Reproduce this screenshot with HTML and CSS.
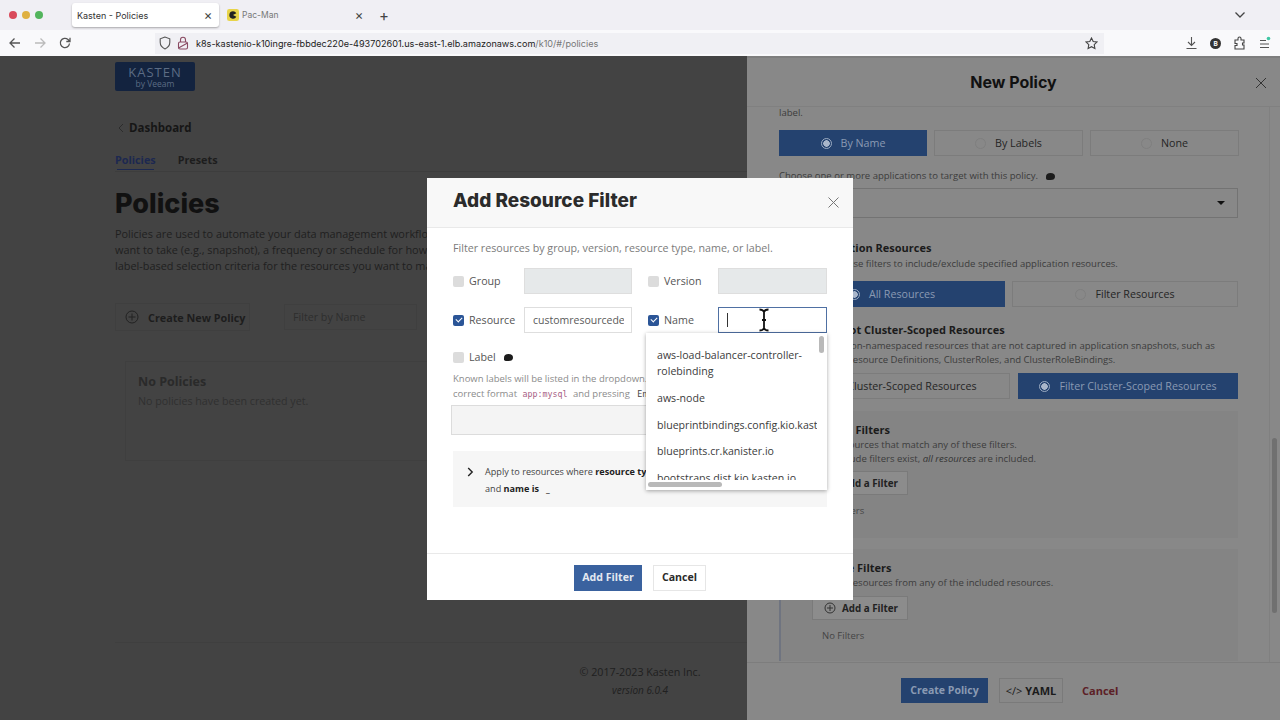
FILE: index.html
```html
<!DOCTYPE html>
<html lang="en">
<head>
    <meta charset="UTF-8">
    <meta name="viewport" content="width=device-width, initial-scale=1.0">
    <title>Kasten - Policies</title>
    <link rel="stylesheet" href="styles.css">
</head>
<body>
    <!-- Browser chrome -->
    <div class="tabbar">
        <div class="lights"><i class="red"></i><i class="yellow"></i><i class="green"></i></div>
        <div class="tab active"><span>Kasten - Policies</span><b>×</b></div>
        <div class="tab">
            <svg class="favicon" width="12" height="12" viewBox="0 0 13 13"><rect width="13" height="13" rx="2.5" fill="#e8d44a"/><path d="M6.500 2.500a4 4 0 1 0 3.600 5.800L6.500 6.500l3.600-1.800a4 4 0 0 0-3.600-2.200z" fill="#222"/></svg>
            <span>Pac-Man</span><b>×</b>
        </div>
        <div class="newtab">+</div>
        <svg class="tabs-menu" width="12" height="8" viewBox="0 0 12 8"><path d="M1.500 1.500 6 6l4.500-4.500" fill="none" stroke="#444" stroke-width="1.300"/></svg>
    </div>
    <div class="toolbar">
        <svg class="nav" width="14" height="14" viewBox="0 0 14 14"><path d="M12 7H2M6.500 2.500 2 7l4.500 4.500" fill="none" stroke="#555" stroke-width="1.300"/></svg>
        <svg class="nav" width="14" height="14" viewBox="0 0 14 14"><path d="M2 7h10M7.500 2.500 12 7l-4.500 4.500" fill="none" stroke="#bbb" stroke-width="1.300"/></svg>
        <svg class="nav" width="14" height="14" viewBox="0 0 14 14"><path d="M11.500 7.500A4.600 4.600 0 1 1 10 3.500L12 5.500M12 1.800v3.700H8.300" fill="none" stroke="#555" stroke-width="1.300"/></svg>
        <div class="urlbar">
            <svg width="12" height="14" viewBox="0 0 12 14"><path d="M6 1 1.200 2.800v3.500c0 3.200 2 5.400 4.800 6.700 2.800-1.300 4.800-3.500 4.800-6.700V2.800z" fill="none" stroke="#555" stroke-width="1.100"/></svg>
            <svg class="lock" width="12" height="14" viewBox="0 0 12 14"><rect x="1.500" y="6" width="9" height="7" rx="1.500" fill="none" stroke="#8a4a62" stroke-width="1.100"/><path d="M3.500 6V3.800a2.500 2.500 0 0 1 5 0V6M1.500 12 10.500 7" fill="none" stroke="#8a4a62" stroke-width="1.100"/></svg>
            <span class="url">k8s-kastenio-k10ingre-fbbdec220e-493702601.us-east-1.elb.amazonaws.com<em>/k10/#/policies</em></span>
            <svg class="star" width="13" height="13" viewBox="0 0 13 13"><path d="m6.500 1 1.700 3.500 3.800.5-2.800 2.700.7 3.800-3.400-1.800-3.400 1.800.7-3.800L1 5l3.800-.5z" fill="none" stroke="#444" stroke-width="1.100"/></svg>
        </div>
        <div class="tools">
            <svg width="13" height="14" viewBox="0 0 13 14"><path d="M6.500 1v8M3 6l3.500 3.500L10 6M1.500 12.500h10" fill="none" stroke="#555" stroke-width="1.100"/></svg>
            <div class="ext-badge">B</div>
            <svg width="13" height="14" viewBox="0 0 13 14"><path d="M2 4h3V2.500a1.500 1.500 0 0 1 3 0V4h3v3H9.500v2H11v4H2V9.500h2v-2H2z" fill="none" stroke="#444" stroke-width="1.100"/></svg>
            <svg width="13" height="14" viewBox="0 0 13 14"><path d="M2 4.500h6M2 8h9M2 11.500h9" stroke="#555" stroke-width="1.200"/><circle cx="10.500" cy="2.500" r="1.800" fill="#3fc7a5"/></svg>
        </div>
    </div>

    <div class="app">
        <!-- Dimmed policies page -->
        <main class="page">
            <div class="logo"><span class="logo-name">KASTEN</span><span class="logo-by">by Veeam</span></div>
            <div class="crumb"><svg width="6" height="10" viewBox="0 0 6 10"><path d="M5 1 1 5l4 4" fill="none" stroke="#2c2c2c" stroke-width="1"/></svg>Dashboard</div>
            <nav class="tabs-nav"><span class="nav-on">Policies</span><span>Presets</span></nav>
            <h1>Policies</h1>
            <p class="lead">Policies are used to automate your data management workflows. They combine actions you<br>want to take (e.g., snapshot), a frequency or schedule for how often to take that action, and<br>label-based selection criteria for the resources you want to manage.</p>
            <div class="page-actions">
                <div class="create-btn">
                    <svg width="14" height="14" viewBox="0 0 14 14"><circle cx="7" cy="7" r="6" fill="none" stroke="#222" stroke-width="1"/><path d="M7 3.500v7M3.500 7h7" stroke="#222" stroke-width="1"/></svg>
                    Create New Policy
                </div>
                <div class="page-filter">Filter by Name</div>
            </div>
            <div class="empty">
                <h3>No Policies</h3>
                <p>No policies have been created yet.</p>
            </div>
            <footer class="page-foot">
                <div>© 2017-2023 Kasten Inc.</div>
                <div class="version">version 6.0.4</div>
            </footer>
        </main>

        <!-- New policy drawer -->
        <aside class="drawer">
            <div class="drawer-head">
                New Policy
                <svg class="drawer-close" width="12" height="12" viewBox="0 0 12 12"><path d="m1 1 10 10M11 1 1 11" stroke="#333" stroke-width="1"/></svg>
            </div>
            <div class="drawer-body">
                <p class="note note-top">label.</p>
                <div class="seg seg-three">
                    <div class="seg-item on"><i class="radio"></i>By Name</div>
                    <div class="seg-item"><i class="radio"></i>By Labels</div>
                    <div class="seg-item"><i class="radio"></i>None</div>
                </div>
                <p class="note note-app">Choose one or more applications to target with this policy. <i class="bubble"></i></p>
                <div class="select"><i class="caret-down"></i></div>

                <h4 class="sect-title">Application Resources</h4>
                <p class="note indent">You can use filters to include/exclude specified application resources.</p>
                <div class="seg seg-two">
                    <div class="seg-item on"><i class="radio"></i>All Resources</div>
                    <div class="seg-item"><i class="radio"></i>Filter Resources</div>
                </div>

                <h4 class="sect-title sect-snap">Snapshot Cluster-Scoped Resources</h4>
                <p class="note indent">Include non-namespaced resources that are not captured in application snapshots, such as<br>Custom Resource Definitions, ClusterRoles, and ClusterRoleBindings.</p>
                <div class="seg seg-two seg-cluster">
                    <div class="seg-item"><i class="radio"></i>All Cluster-Scoped Resources</div>
                    <div class="seg-item on"><i class="radio"></i>Filter Cluster-Scoped Resources</div>
                </div>

                <section class="filter-block block-include">
                    <h4>Include Filters</h4>
                    <p class="note">Only resources that match any of these filters.<br>If no include filters exist, <em>all resources</em> are included.</p>
                    <div class="add-btn"><svg width="12" height="12" viewBox="0 0 12 12"><circle cx="6" cy="6" r="5" fill="none" stroke="#333"/><path d="M6 3v6M3 6h6" stroke="#333"/></svg>Add a Filter</div>
                    <p class="no-filters">No Filters</p>
                </section>
                <section class="filter-block block-exclude">
                    <h4>Exclude Filters</h4>
                    <p class="note">Exclude resources from any of the included resources.</p>
                    <div class="add-btn"><svg width="12" height="12" viewBox="0 0 12 12"><circle cx="6" cy="6" r="5" fill="none" stroke="#333"/><path d="M6 3v6M3 6h6" stroke="#333"/></svg>Add a Filter</div>
                    <p class="no-filters">No Filters</p>
                </section>
            </div>
            <div class="scroll-thumb"></div>
            <div class="drawer-foot">
                <div class="btn-create">Create Policy</div>
                <div class="btn-yaml"><span class="code-mark">&lt;/&gt;</span> YAML</div>
                <div class="btn-cancel">Cancel</div>
            </div>
        </aside>

        <!-- Add filter dialog -->
        <div class="modal">
            <div class="modal-head">
                <h2>Add Resource Filter</h2>
                <svg width="11" height="11" viewBox="0 0 11 11"><path d="m.5.500 10 10M10.500.500l-10 10" stroke="#777" stroke-width="1"/></svg>
            </div>
            <div class="modal-body">
                <p class="modal-desc">Filter resources by group, version, resource type, name, or label.</p>
                <div class="form-grid">
                    <i class="check"></i><span class="lbl">Group</span><div class="field disabled"></div>
                    <i class="check"></i><span class="lbl">Version</span><div class="field disabled"></div>

                    <i class="check checked"></i><span class="lbl">Resource</span><div class="field"><span class="field-text">customresourcedefinitions</span></div>
                    <i class="check checked"></i><span class="lbl">Name</span>
                    <div class="field focused">
                        <span class="text-caret"></span>
                        <div class="dropdown">
                            <div class="dd-list">
                                <div class="dd-item">aws-load-balancer-controller-rolebinding</div>
                                <div class="dd-item">aws-node</div>
                                <div class="dd-item nowrap">blueprintbindings.config.kio.kasten.io</div>
                                <div class="dd-item">blueprints.cr.kanister.io</div>
                                <div class="dd-item">bootstraps.dist.kio.kasten.io</div>
                            </div>
                            <div class="dd-vbar"><i></i></div>
                            <div class="dd-hbar"><i></i></div>
                        </div>
                        <svg class="ibeam" width="12" height="24" viewBox="0 0 12 24"><path d="M1.500 1.500c2.500 0 4 .8 4.500 2.500.5-1.700 2-2.500 4.500-2.500M6 4v16M1.500 22.500c2.500 0 4-.8 4.500-2.500.5 1.700 2 2.500 4.500 2.500M4 12h4" fill="none" stroke="#111" stroke-width="1.800"/></svg>
                    </div>
                </div>
                <div class="label-row"><i class="check"></i><span class="lbl">Label</span><i class="bubble"></i></div>
                <p class="help">Known labels will be listed in the dropdown. Add a new label by typing it in the<br>correct format <code>app:mysql</code> and pressing <kbd>Enter</kbd>.</p>
                <div class="label-input"></div>
                <div class="summary">
                    <svg width="7" height="10" viewBox="0 0 7 10"><path d="m1.200 1 4 4-4 4" fill="none" stroke="#222" stroke-width="1.400"/></svg>
                    <p>Apply to resources where <b>resource type is</b> customresourcedefinitions<br>and <b>name is</b> &nbsp; <b>_</b></p>
                </div>
            </div>
            <div class="modal-foot">
                <div class="btn-add">Add Filter</div>
                <div class="btn-plain">Cancel</div>
            </div>
        </div>
    </div>
</body>
</html>
```

FILE: styles.css
```css
* {
    box-sizing: border-box;
}
html, body {
    margin: 0;
    height: 720px;
    overflow: hidden;
}
body {
    font-family: "Open Sans", "Liberation Sans", sans-serif;
    font-size: 12px;
    color: #222;
    background: #434343;
}
p, h1, h2, h3, h4 {
    margin: 0;
}

/* browser chrome */
.tabbar {
    height: 30px;
    padding-top: 3px;
    display: flex;
    align-items: flex-start;
    background: #f0eff4;
    font-family: Inter, "Liberation Sans", sans-serif;
    font-size: 9px;
    color: #333;
}
.lights {
    display: flex;
    gap: 5px;
    padding: 8px 0 0 9px;
    width: 72px;
}
.lights i {
    width: 8px;
    height: 8px;
    border-radius: 50%;
}
.red { background: #d9495a; }
.yellow { background: #dfb041; }
.green { background: #52b45c; }
.tab {
    width: 151px;
    height: 24px;
    padding: 0 0 0 8px;
    display: flex;
    align-items: center;
}
.tab span {
    flex: 1;
    color: #777;
    font-size: 8.500px;
}
.tab b {
    font-weight: 400;
    font-size: 13px;
    width: 20px;
    text-align: center;
    color: #444;
    margin-right: 1px;
}
.tab.active {
    width: 147px;
    background: #fff;
    border-radius: 3px;
    box-shadow: 0 1px 2px rgba(0, 0, 0, .3);
    padding-left: 5px;
}
.tab.active span {
    color: #333;
    font-size: 9px;
}
.tab .favicon {
    margin-right: 3px;
}
.newtab {
    margin: 3px 0 0 9px;
    font-size: 15px;
    color: #444;
}
.tabs-menu {
    margin: 8px 34px 0 auto;
}
.toolbar {
    height: 26px;
    background: #f9f9fb;
    display: flex;
    align-items: center;
    padding-left: 8px;
}
.nav {
    margin-right: 11px;
}
.urlbar {
    margin-left: 72px;
    width: 949px;
    height: 21px;
    background: #f0f0f4;
    display: flex;
    align-items: center;
    padding-left: 4px;
    font-family: Inter, "Liberation Sans", sans-serif;
    font-size: 9.100px;
    color: #222;
}
.urlbar .lock {
    margin-left: 6px;
}
.url {
    margin-left: 7px;
}
.url em {
    font-style: normal;
    color: #777;
}
.star {
    margin-left: auto;
    margin-right: 6px;
}
.tools {
    display: flex;
    gap: 12px;
    align-items: center;
    margin-left: 81px;
}
.ext-badge {
    width: 11px;
    height: 11px;
    border-radius: 50%;
    background: #333;
    color: #eee;
    font-size: 7px;
    line-height: 11px;
    text-align: center;
    font-weight: 700;
}

/* the dimmed page behind */
.app {
    position: relative;
    height: 664px;
    overflow: hidden;
}
.page {
    height: 664px;
    padding: 6px 115px 0;
    display: flex;
    flex-direction: column;
    background: #434343;
    color: #1d1d1d;
}
.logo {
    width: 80px;
    height: 29px;
    background: #13233f;
    border-radius: 2px;
    display: flex;
    flex-direction: column;
    align-items: center;
    color: #5c6c84;
    line-height: 1;
}
.logo-name {
    font-size: 13px;
    letter-spacing: 1px;
    margin-top: 4px;
}
.logo-by {
    font-size: 8.500px;
    margin-top: 1px;
}
.crumb {
    margin-top: 28px;
    font-size: 11.500px;
    font-weight: 700;
    line-height: 18px;
    display: flex;
    align-items: center;
    gap: 5px;
    padding-left: 3px;
    color: #161616;
}
.tabs-nav {
    margin-top: 14px;
    display: flex;
    gap: 22px;
    font-size: 10.800px;
    font-weight: 700;
    line-height: 18px;
    border-bottom: 1px solid #3d3d3d;
    padding-bottom: 2px;
}
.nav-on {
    color: #1c2850;
    box-shadow: 0 3px 0 -2px #1c2850;
}
h1 {
    margin-top: 15px;
    font-family: Inter, "Liberation Sans", sans-serif;
    font-size: 27px;
    font-weight: 800;
    line-height: 34px;
    color: #111;
}
.lead {
    margin-top: 5px;
    font-size: 10.900px;
    line-height: 16px;
    white-space: nowrap;
    color: #1f1f1f;
}
.page-actions {
    margin-top: 29px;
    display: flex;
    gap: 34px;
    align-items: center;
}
.create-btn {
    width: 135px;
    height: 28px;
    border: 1px solid #3f3f3f;
    display: flex;
    align-items: center;
    gap: 9px;
    padding-left: 9px;
    font-size: 10.800px;
    font-weight: 700;
}
.page-filter {
    width: 133px;
    height: 26px;
    border: 1px solid #3f3f3f;
    padding-left: 8px;
    line-height: 24px;
    color: #2e2e2e;
    font-size: 10.700px;
}
.empty {
    margin: 30px 0 0 10px;
    width: 1030px;
    height: 100px;
    border: 1px solid #3f3f3f;
    padding: 11px 12px;
}
.empty h3 {
    font-size: 12.500px;
    line-height: 18px;
    color: #2a2a2a;
}
.empty p {
    margin-top: 3px;
    font-size: 10.700px;
    color: #303030;
}
.page-foot {
    margin-top: auto;
    padding: 22px 0 23px;
    border-top: 1px solid #3f3f3f;
    text-align: center;
    font-size: 10.700px;
    color: #202020;
}
.version {
    margin-top: 4px;
    font-size: 10px;
    font-style: italic;
}

/* new policy drawer */
.drawer {
    position: absolute;
    top: 0;
    right: 0;
    bottom: 0;
    width: 533px;
    background: #888;
    display: flex;
    flex-direction: column;
    color: #1f1f1f;
}
.drawer-head {
    height: 51px;
    flex: none;
    display: flex;
    align-items: center;
    justify-content: center;
    position: relative;
    font-family: Inter, "Liberation Sans", sans-serif;
    font-size: 16px;
    font-weight: 700;
    color: #111;
    border-bottom: 1px solid #808080;
    border-top: 2px solid #7e7e7e;
}
.drawer-close {
    position: absolute;
    right: 13px;
    top: 19px;
}
.drawer-body {
    flex: 1;
    overflow: hidden;
    margin-right: 10px;
    border-right: 1px solid #808080;
    padding: 0 31px 0 32px;
}
.note {
    font-size: 9.550px;
    line-height: 14px;
    color: #3c3c3c;
    white-space: nowrap;
}
.note-top {
    margin-top: -1px;
}
.indent {
    padding-left: 31px;
    margin-top: 1px;
}
.seg {
    display: grid;
    height: 26px;
}
.seg-three {
    grid-template-columns: 148px 149px 149px;
    gap: 7px;
    margin-top: 10px;
}
.seg-two {
    grid-template-columns: 226px 226px;
    gap: 7px;
    margin-top: 10px;
}
.seg-cluster {
    grid-template-columns: 231px 220px;
    gap: 8px;
    margin-top: 6px;
}
.seg-item {
    border: 1px solid #7c7c7c;
    display: flex;
    align-items: center;
    justify-content: center;
    gap: 9px;
    font-size: 10.700px;
    color: #252525;
}
.seg-item.on {
    background: #24426f;
    border-color: #24426f;
    color: #8a9ab3;
}
.radio {
    width: 11px;
    height: 11px;
    border-radius: 50%;
    border: 1px solid #7f7f7f;
}
.on .radio {
    border-color: #9babc2;
    background: radial-gradient(circle, #a9b6ca 0 3px, #24426f 3.500px);
}
.note-app {
    margin-top: 13px;
    display: flex;
    align-items: center;
    gap: 5px;
}
.bubble {
    width: 9px;
    height: 7px;
    border-radius: 50% 50% 50% 20%;
    background: #1c1c1c;
    display: inline-block;
    margin-left: 3px;
}
.select {
    margin-top: 5px;
    height: 30px;
    border: 1px solid #737373;
    display: flex;
    align-items: center;
    justify-content: flex-end;
    padding-right: 12px;
}
.caret-down {
    border: 4px solid transparent;
    border-top-color: #111;
    border-bottom: 0;
}
.sect-title {
    margin-top: 22px;
    padding-left: 31px;
    font-size: 11px;
    line-height: 16px;
    font-weight: 700;
    color: #1b1b1b;
}
.sect-snap {
    margin-top: 15px;
}
.filter-block {
    background: #848484;
    padding: 11px 33px 0;
}
.filter-block .note {
    margin-top: 1px;
}
.block-include {
    margin-top: 12px;
    height: 127px;
}
.block-exclude {
    margin-top: 11px;
    height: 112px;
    border-left: 2px solid #6f7480;
    padding-left: 31px;
}
.filter-block h4 {
    font-size: 11px;
    line-height: 15px;
    color: #1b1b1b;
}
.filter-block em {
    color: #333;
}
.add-btn {
    margin-top: 5px;
    width: 96px;
    height: 24px;
    border: 1px solid #7a7a7a;
    background: #8c8c8c;
    display: flex;
    align-items: center;
    gap: 6px;
    padding-left: 11px;
    font-size: 9.800px;
    font-weight: 700;
    color: #222;
}
.block-exclude .add-btn {
    margin-top: 6px;
}
.no-filters {
    margin: 9px 0 0 10px;
    font-size: 9.500px;
    color: #444;
}
.scroll-thumb {
    position: absolute;
    right: 3px;
    top: 382px;
    width: 5px;
    height: 175px;
    background: #707070;
    border-radius: 3px;
}
.drawer-foot {
    height: 58px;
    flex: none;
    border-top: 1px solid #7d7d7d;
    display: flex;
    align-items: center;
    padding-left: 154px;
    padding-bottom: 2px;
    font-weight: 700;
    font-size: 10.500px;
}
.btn-create {
    width: 87px;
    height: 25px;
    background: #24426f;
    color: #8a9ab3;
    line-height: 25px;
    text-align: center;
}
.btn-yaml {
    margin-left: 11px;
    width: 64px;
    height: 25px;
    border: 1px solid #7a7a7a;
    line-height: 23px;
    text-align: center;
    color: #1b1b1b;
    font-size: 11px;
}
.code-mark {
    font-weight: 400;
}
.btn-cancel {
    margin-left: 19px;
    color: #5c2026;
    font-size: 11px;
}

/* add filter dialog */
.modal {
    position: absolute;
    left: 427px;
    top: 122px;
    width: 426px;
    height: 422px;
    background: #fff;
    display: flex;
    flex-direction: column;
}
.modal-head {
    height: 50px;
    flex: none;
    background: #f8f8f8;
    border-bottom: 1px solid #e9e9e9;
    display: flex;
    justify-content: space-between;
    padding: 0 14px 0 26px;
}
.modal-head h2 {
    font-family: Inter, "Liberation Sans", sans-serif;
    font-size: 19px;
    line-height: 45px;
    font-weight: 800;
    color: #2b2b2b;
}
.modal-head svg {
    margin-top: 19px;
}
.modal-body {
    flex: 1;
    padding: 12px 26px 0;
}
.modal-desc {
    font-size: 10.700px;
    line-height: 17px;
    color: #7b7b7b;
}
.form-grid {
    margin-top: 11px;
    display: grid;
    grid-template-columns: 11px 50px 108px 22px 49px 109px;
    grid-auto-rows: 26px;
    column-gap: 5px;
    row-gap: 13px;
    align-items: center;
    font-size: 10.700px;
}
.check {
    width: 11px;
    height: 11px;
    border-radius: 2px;
    background: #dcdcdc;
    display: block;
    justify-self: end;
}
.check.checked {
    background: #2b5597;
    position: relative;
}
.check.checked::after {
    content: "";
    position: absolute;
    left: 3px;
    top: 2px;
    width: 5px;
    height: 3px;
    border-left: 1.500px solid #fff;
    border-bottom: 1.500px solid #fff;
    transform: rotate(-45deg);
}
.lbl {
    color: #555;
}
.field {
    height: 26px;
    border: 1px solid #dedede;
    padding: 0 7px 0 8px;
    line-height: 25px;
    color: #5a5a5a;
    font-size: 10.500px;
    white-space: nowrap;
}
.field-text {
    display: block;
    overflow: hidden;
}
.field.disabled {
    background: #e6e9ea;
}
.field.focused {
    position: relative;
    border-color: #4f70a3;
}
.text-caret {
    display: block;
    width: 1px;
    height: 14px;
    margin-top: 5px;
    background: #333;
}
.ibeam {
    position: absolute;
    left: 39px;
    top: 0;
}
.dropdown {
    position: absolute;
    left: -73px;
    top: 25px;
    width: 181px;
    height: 157px;
    background: #fff;
    box-shadow: 0 1px 4px rgba(0, 0, 0, .35);
    overflow: hidden;
    z-index: 2;
}
.dd-list {
    width: 171px;
    height: 147px;
    padding: 14px 0 0 11px;
    overflow: hidden;
}
.dd-item {
    font-size: 10.600px;
    line-height: 16px;
    color: #3b3b3b;
    margin-bottom: 10.750px;
    white-space: normal;
    width: 157px;
}
.dd-item.nowrap {
    white-space: nowrap;
}
.dd-vbar {
    position: absolute;
    right: 0;
    top: 0;
    bottom: 9px;
    width: 10px;
}
.dd-vbar i {
    display: block;
    margin: 3px 0 0 2px;
    width: 5px;
    height: 17px;
    border-radius: 3px;
    background: #b9b9b9;
}
.dd-hbar {
    position: absolute;
    left: 0;
    right: 0;
    bottom: 0;
    height: 10px;
    background: #fff;
}
.dd-hbar i {
    display: block;
    margin: 2px 0 0 2px;
    width: 74px;
    height: 5px;
    border-radius: 3px;
    background: #b9b9b9;
}
.label-row {
    margin-top: 11px;
    display: flex;
    align-items: center;
    gap: 5px;
    font-size: 10.700px;
    line-height: 26px;
}
.label-row .bubble {
    margin-left: 3px;
}
.help {
    margin-top: 1px;
    font-size: 9.500px;
    line-height: 15px;
    color: #8b8b8b;
    white-space: nowrap;
}
code {
    font-family: "DejaVu Sans Mono", monospace;
    font-size: 8.300px;
    color: #a85f85;
    margin: 0 3px;
}
kbd {
    font-family: "DejaVu Sans Mono", monospace;
    font-size: 8.300px;
    color: #444;
    margin-left: 5px;
}
.label-input {
    margin: 3px 0 0 -2px;
    height: 30px;
    background: #f4f4f4;
    border: 1px solid #dcdcdc;
}
.summary {
    margin-top: 16px;
    height: 56px;
    background: #f6f6f6;
    display: flex;
    gap: 11px;
    padding: 12px 0 0 14px;
    font-size: 9.100px;
    line-height: 17px;
    color: #444;
    white-space: nowrap;
    overflow: hidden;
}
.summary svg {
    margin-top: 4px;
    flex: none;
}
.summary b {
    color: #222;
}
.modal-foot {
    height: 47px;
    flex: none;
    border-top: 1px solid #e9e9e9;
    display: flex;
    justify-content: center;
    gap: 11px;
    padding-top: 11px;
    font-size: 10.600px;
    font-weight: 700;
}
.btn-add {
    width: 68px;
    height: 26px;
    background: #3a629f;
    color: #e4e9f1;
    text-align: center;
    line-height: 25px;
}
.btn-plain {
    width: 53px;
    height: 26px;
    border: 1px solid #e6e6e6;
    text-align: center;
    line-height: 23px;
    color: #2b2b2b;
}
```
